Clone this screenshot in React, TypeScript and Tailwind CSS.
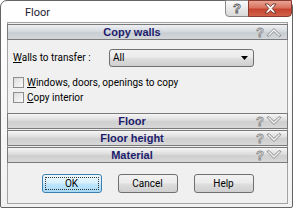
import React from "react";

const ui = { fontFamily: "Roboto, 'Liberation Sans', sans-serif" };
const hdr = { fontFamily: "'Liberation Sans', Arial, sans-serif" };

function HelpGlyph() {
  return (
    <span
      className="text-[13px] font-bold leading-none text-[#e4e4e4] [-webkit-text-stroke:0.8px_#8c8c8c]"
      style={hdr}
    >
      ?
    </span>
  );
}

function Chevron({ up }: { up?: boolean }) {
  return (
    <svg width="16" height="10" viewBox="0 0 16 10" className="block">
      {up ? (
        <path
          d="M1 8.5 L8 1.5 L15 8.5 L13 9.5 L8 4.5 L3 9.5 Z"
          fill="#f4f4f4"
          stroke="#808080"
          strokeWidth="0.9"
          strokeLinejoin="round"
        />
      ) : (
        <path
          d="M1 1.5 L8 8.5 L15 1.5 L13 0.5 L8 5.5 L3 0.5 Z"
          fill="#f4f4f4"
          stroke="#808080"
          strokeWidth="0.9"
          strokeLinejoin="round"
        />
      )}
    </svg>
  );
}

function SectionHeader({ title, open, blue }: { title: string; open?: boolean; blue?: boolean }) {
  return (
    <div
      className={
        "-mx-px flex h-[16px] items-center border border-[#7a7a7a] " +
        (blue
          ? "bg-[linear-gradient(to_bottom,#eef0f2_0%,#d6dbe0_45%,#c9ced3_55%,#d3d7db_100%)]"
          : "bg-[linear-gradient(to_bottom,#f6f6f6_0%,#dcdcdc_45%,#cfcfcf_55%,#d8d8d8_100%)]")
      }
    >
      <div
        className="flex-1 text-center text-[11px] font-bold leading-none text-[#1c1c6b]"
        style={hdr}
      >
        {title}
      </div>
      <div className="flex w-[31px] items-center gap-[2px]">
        <HelpGlyph />
        <Chevron up={open} />
      </div>
    </div>
  );
}

function Checkbox({ label, u }: { label: string; u: string }) {
  return (
    <div className="flex h-[11px] items-center gap-[3px]">
      <div className="h-[11px] w-[11px] border border-[#8e8f8f] bg-[linear-gradient(135deg,#dcdcdc,#fbfbfb)]" />
      <span className="text-[10px] leading-none text-[#000]" style={ui}>
        <span className="underline">{u}</span>
        {label}
      </span>
    </div>
  );
}

function Button({ label, primary }: { label: string; primary?: boolean }) {
  return (
    <div
      className={
        "flex h-[19px] w-[60px] items-center justify-center rounded-[3px] border p-[2px] " +
        (primary
          ? "border-[#3c7fb1] bg-[linear-gradient(to_bottom,#eaf6fd_0%,#d9f0fc_45%,#bee6fd_55%,#a7d9f5_100%)]"
          : "border-[#707070] bg-[linear-gradient(to_bottom,#f2f2f2_0%,#ebebeb_45%,#dddddd_55%,#cfcfcf_100%)]")
      }
    >
      <div
        className={
          "flex h-full w-full items-center justify-center text-[10px] leading-none text-black " +
          (primary ? "border border-dotted border-[#333]" : "")
        }
        style={ui}
      >
        {label}
      </div>
    </div>
  );
}

export default function App() {
  return (
    <div className="h-[209px] w-[294px] bg-white">
      <div className="flex h-[208px] w-[293px] flex-col rounded-t-[7px] rounded-b-[2px] border border-[#646464] bg-[linear-gradient(to_bottom,#ffffff,#f2f2f2)]">
        {/* title bar */}
        <div className="flex h-[21px] items-start">
          <div className="flex-1 pl-[24px] pt-[6px] text-[11px] leading-none text-[#1a1a2e]" style={ui}>
            Floor
          </div>
          <div className="-mt-px flex">
            <div className="flex h-[17px] w-[24px] items-center justify-center rounded-bl-[4px] border border-[#8a8a8a] bg-[linear-gradient(to_bottom,#fbfbfb_0%,#e9e9e9_50%,#d9d9d9_100%)]">
              <span
                className="text-[13px] font-bold leading-none text-[#f4f4f4] [-webkit-text-stroke:0.8px_#5a5a5a]"
                style={hdr}
              >
                ?
              </span>
            </div>
            <div className="-ml-px flex h-[17px] w-[44px] items-center justify-center rounded-br-[4px] border border-[#8a3a2e] bg-[linear-gradient(to_bottom,#e8a394_0%,#d9735f_45%,#c7432f_55%,#d1614a_100%)]">
              <svg width="13" height="11" viewBox="0 0 13 11">
                <path
                  d="M1 1 H4 L6.5 3.6 L9 1 H12 L8.2 5.5 L12 10 H9 L6.5 7.4 L4 10 H1 L4.8 5.5 Z"
                  fill="#ffffff"
                  stroke="#5a2a22"
                  strokeWidth="0.8"
                  strokeLinejoin="round"
                />
              </svg>
            </div>
          </div>
        </div>

        {/* client */}
        <div className="ml-[6px] flex h-[182px] w-[281px] flex-col border border-[#a3a3a3] bg-[#f0f0f0] pt-px">
          <SectionHeader title="Copy walls" open blue />
          <div className="flex h-[73px] flex-col px-[5px]">
            <div className="mt-[9px] flex h-[18px] items-center">
              <span className="w-[96px] text-[10px] leading-none text-black" style={ui}>
                <span className="underline">W</span>alls to transfer :
              </span>
              <div className="flex h-[18px] w-[145px] items-center justify-between rounded-[3px] border border-[#707070] bg-[linear-gradient(to_bottom,#f2f2f2_0%,#ebebeb_45%,#dddddd_55%,#cfcfcf_100%)] pl-[3px] pr-[5px]">
                <span className="text-[10px] leading-none text-black" style={ui}>
                  All
                </span>
                <svg width="7" height="4" viewBox="0 0 7 4">
                  <path d="M0 0 H7 L3.5 4 Z" fill="#000" />
                </svg>
              </div>
            </div>
            <div className="mt-[10px] flex flex-col gap-[4px]">
              <Checkbox u="W" label="indows, doors, openings to copy" />
              <Checkbox u="C" label="opy interior" />
            </div>
          </div>
          <SectionHeader title="Floor" />
          <div className="mt-px">
            <SectionHeader title="Floor height" />
          </div>
          <div className="mt-px">
            <SectionHeader title="Material" />
          </div>
          <div className="mt-[11px] flex justify-center gap-[16px]">
            <Button label="OK" primary />
            <Button label="Cancel" />
            <Button label="Help" />
          </div>
        </div>
      </div>
    </div>
  );
}
